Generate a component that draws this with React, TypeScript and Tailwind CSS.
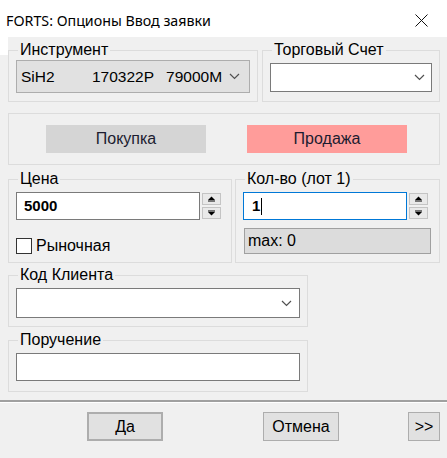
import type { ReactNode } from "react";

const font = { fontFamily: '"Liberation Sans", Arial, sans-serif' };

function Group({ label, className, children }: { label?: string; className?: string; children: ReactNode }) {
  return (
    <fieldset className={`border border-[#dcdcdc] box-border px-[7px] ${className ?? ""}`}>
      {label && <legend className="ml-[2px] px-[2px] text-[16px] leading-[16px] text-black">{label}</legend>}
      {children}
    </fieldset>
  );
}

function Chevron() {
  return (
    <svg width="11" height="7" viewBox="0 0 11 7" className="shrink-0">
      <path d="M1 1 L5.5 5.5 L10 1" fill="none" stroke="#505050" strokeWidth="1.2" />
    </svg>
  );
}

function Spinner() {
  return (
    <div className="ml-[2px] flex flex-col gap-[2px] pt-[1px]">
      <div className="w-[19px] h-[12px] border border-[#c4c4c4] bg-[#e9e9e9] flex flex-col items-center justify-center">
        <svg width="9" height="6" viewBox="0 0 9 6">
          <path d="M4.5 0.5 L8 4 L1 4 Z" fill="#000" />
          <rect x="1" y="4.5" width="7" height="1" fill="#000" />
        </svg>
      </div>
      <div className="w-[19px] h-[12px] border border-[#c4c4c4] bg-[#e9e9e9] flex flex-col items-center justify-center">
        <svg width="9" height="6" viewBox="0 0 9 6">
          <rect x="1" y="0.5" width="7" height="1" fill="#000" />
          <path d="M1 2 L8 2 L4.5 5.5 Z" fill="#000" />
        </svg>
      </div>
    </div>
  );
}

function WinButton({ children, className }: { children: ReactNode; className?: string }) {
  return (
    <div
      className={`h-[29px] flex items-center justify-center bg-[#e1e1e1] border border-[#adadad] text-[16px] text-black ${className ?? ""}`}
    >
      {children}
    </div>
  );
}

export default function App() {
  return (
    <div className="w-[447px] h-[458px] flex flex-col bg-[#f0f0f0] overflow-hidden" style={font}>
      {/* title bar */}
      <div className="h-[37px] bg-white flex items-center justify-between pl-[6px] pr-[19px] pt-[4px] shrink-0">
        <span className="text-[14.25px] text-black" style={{ fontFamily: '"Noto Sans", "Open Sans", sans-serif' }}>
          FORTS: Опционы Ввод заявки
        </span>
        <svg width="13" height="13" viewBox="0 0 13 13">
          <path d="M0.5 0.5 L12.5 12.5 M12.5 0.5 L0.5 12.5" stroke="#111" strokeWidth="1" />
        </svg>
      </div>

      <div className="flex">
        <div className="w-[8px] h-[18px] bg-white shrink-0" />
        <div className="flex-1 flex flex-col pr-[7px] pt-[5px]">
          {/* instrument / account */}
          <div className="flex gap-[4px]">
            <Group label="Инструмент" className="w-[250px] h-[60px]">
              <div className="mt-[2px] h-[33px] bg-[#e1e1e1] border border-[#adadad] flex items-center pl-[4px] pr-[9px] text-[15.5px] text-black">
                <span className="w-[71px]">SiH2</span>
                <span>170322P</span>
                <span className="ml-[12px] flex-1">79000M</span>
                <Chevron />
              </div>
            </Group>
            <Group label="Торговый Счет" className="w-[178px] h-[60px]">
              <div className="mt-[5px] h-[29px] bg-white border border-[#7a7a7a] flex items-center justify-end pr-[6px]">
                <Chevron />
              </div>
            </Group>
          </div>

          {/* buy / sell */}
          <div className="mt-[11px] h-[52px] border border-[#dcdcdc] flex items-center pl-[37px] gap-[41px]">
            <div className="w-[160px] h-[28px] bg-[#d5d5d5] flex items-center justify-center text-[16px] text-[#1c1c30]">
              Покупка
            </div>
            <div className="w-[160px] h-[28px] bg-[#ff9c9a] flex items-center justify-center text-[16px] text-[#1c1c30]">
              Продажа
            </div>
          </div>

          {/* price / qty */}
          <div className="mt-[6px] flex gap-[3px]">
            <Group label="Цена" className="w-[224px] h-[92px]">
              <div className="mt-[5px] flex items-start">
                <div className="w-[184px] h-[28px] bg-white border border-[#7a7a7a] flex items-center pl-[7px] text-[15px] font-bold text-black">
                  5000
                </div>
                <Spinner />
              </div>
              <div className="mt-[14px] flex items-center gap-[4px]">
                <div className="w-[16px] h-[16px] bg-white border border-[#333]" />
                <span className="text-[16px] text-black">Рыночная</span>
              </div>
            </Group>
            <Group label="Кол-во (лот 1)" className="w-[205px] h-[92px]">
              <div className="mt-[5px] flex items-start">
                <div className="w-[164px] h-[28px] bg-white border border-[#0078d7] flex items-center pl-[8px] text-[15px] font-bold text-black">
                  1<span className="ml-[1px] w-[1px] h-[17px] bg-black" />
                </div>
                <Spinner />
              </div>
              <div className="mt-[8px] ml-[1px] w-[187px] h-[26px] bg-[#dcdcdc] border border-[#a0a0a0] flex items-center pl-[3px] text-[16px] text-black">
                max: 0
              </div>
            </Group>
          </div>

          {/* client code */}
          <Group label="Код Клиента" className="mt-[4px] w-[300px] h-[60px]">
            <div className="mt-[5px] h-[30px] bg-white border border-[#7a7a7a] flex items-center justify-end pr-[7px]">
              <Chevron />
            </div>
          </Group>

          {/* order comment */}
          <Group label="Поручение" className="mt-[5px] w-[300px] h-[60px]">
            <div className="mt-[5px] h-[28px] bg-white border border-[#7a7a7a]" />
          </Group>
        </div>
      </div>

      {/* separator */}
      <div className="mt-[8px] h-[2px] bg-[#a0a0a0] border-b border-white box-content" />

      {/* bottom buttons */}
      <div className="mt-[9px] flex items-center">
        <WinButton className="ml-[87px] w-[76px] border-2 border-[#0078d7]">Да</WinButton>
        <WinButton className="ml-[100px] w-[76px]">Отмена</WinButton>
        <WinButton className="ml-[69px] w-[32px]">&gt;&gt;</WinButton>
      </div>
    </div>
  );
}
